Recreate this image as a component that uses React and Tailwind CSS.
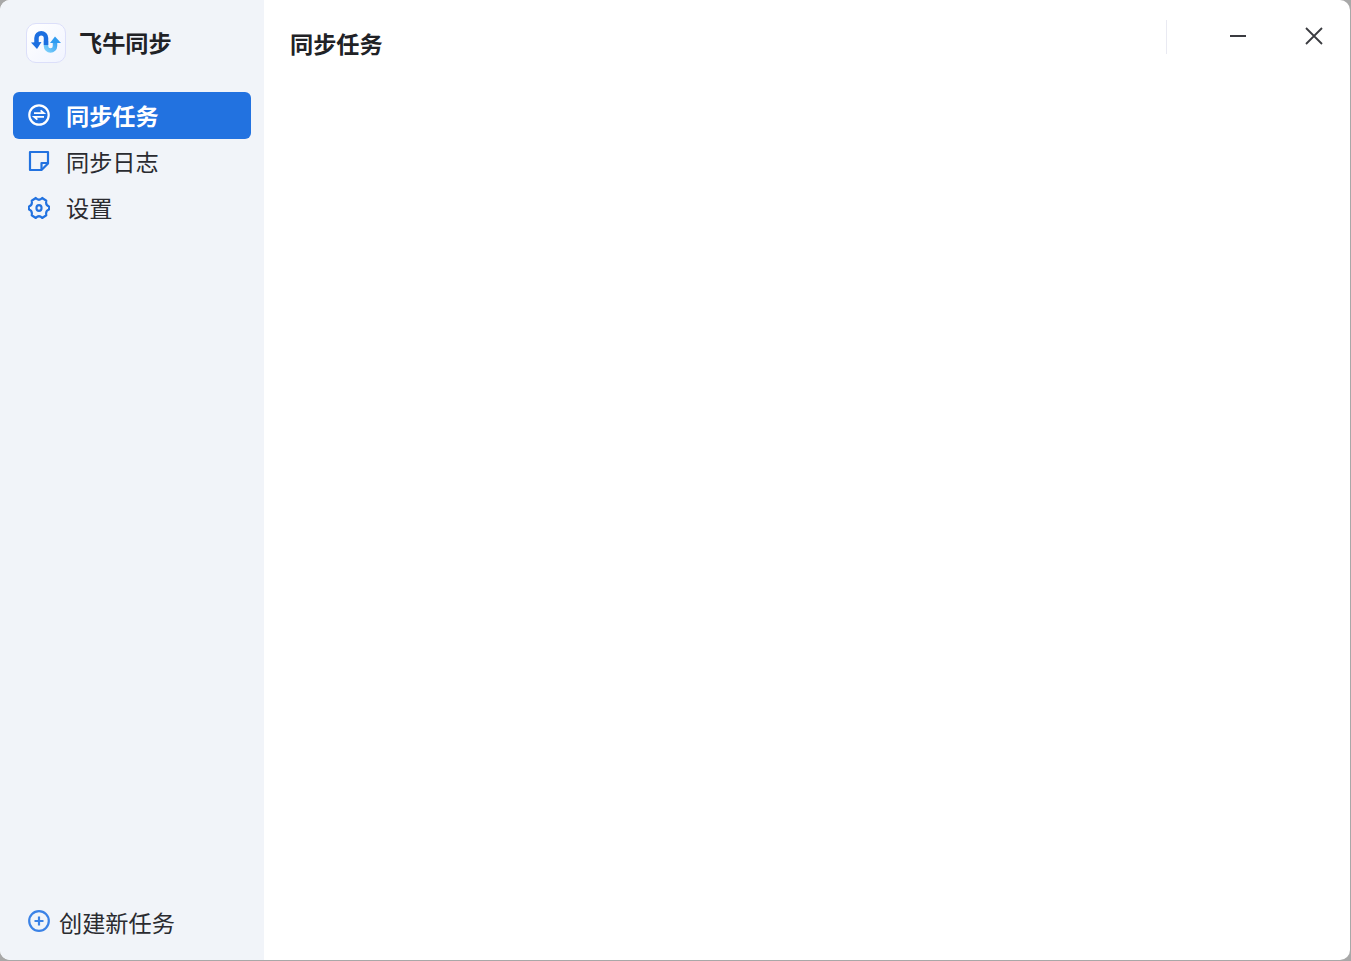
import { useState } from 'react';

const FONT = "font-['Noto_Sans_CJK_SC','Noto_Sans',sans-serif]";

function Logo() {
  return (
    <div className="flex h-10 w-10 items-center justify-center rounded-[10px] border border-[#dcdffa] bg-gradient-to-br from-white to-[#f1f4ff]">
      <svg width="32" height="26" viewBox="0 0 32 26" fill="none">
        <defs>
          <linearGradient id="logoLight" x1="14" y1="22" x2="26" y2="10" gradientUnits="userSpaceOnUse">
            <stop stopColor="#86d6fc" />
            <stop offset="1" stopColor="#2f9bf0" />
          </linearGradient>
        </defs>
        <path d="M16 11v5a4.500 4.500 0 0 0 9 0V13" stroke="url(#logoLight)" strokeWidth="4.500" />
        <path d="M6.500 13V8a4.750 4.750 0 0 1 9.500 0V15" stroke="#1c6fe0" strokeWidth="4.500" />
        <path d="M1 12.500l10.500-.5-4.500 7z" fill="#1c6fe0" />
        <path d="M20 13l5-6.500 6 6.500z" fill="#2f9bf0" />
      </svg>
    </div>
  );
}

function SyncIcon() {
  return (
    <svg width="22" height="22" viewBox="0 0 22 22" fill="none" stroke="currentColor" strokeWidth="2.200">
      <circle cx="11" cy="11" r="9.700" />
      <path d="M6 9.200h9.800l-3.200-2.800M16 12.800H6.200l3.200 2.800" strokeWidth="1.800" />
    </svg>
  );
}

function LogIcon() {
  return (
    <svg width="22" height="22" viewBox="0 0 22 22" fill="none" stroke="currentColor" strokeWidth="2.200" strokeLinejoin="round">
      <path d="M2 2h18v11.500L13.500 20H2z" />
      <path d="M20 13h-6.500v7" />
    </svg>
  );
}

function GearIcon() {
  return (
    <svg width="22" height="24" viewBox="0 -1 24 24" fill="none" stroke="currentColor" strokeWidth="2.300" strokeLinejoin="round" preserveAspectRatio="none">
      <path d="M8.500 2Q12 5.500 15.500 2L20 4.800Q18.800 9.200 23 10.500V13.500Q18.800 14.800 20 19.200L15.500 22Q12 18.500 8.500 22L4 19.200Q5.200 14.800 1 13.500V10.500Q5.200 9.200 4 4.800Z" />
      <circle cx="12" cy="12" r="2.800" />
    </svg>
  );
}

function PlusIcon() {
  return (
    <svg width="22" height="22" viewBox="0 0 22 22" fill="none" stroke="currentColor" strokeWidth="2.200">
      <circle cx="11" cy="11" r="9.800" />
      <path d="M6.500 11h9M11 6.500v9" />
    </svg>
  );
}

const navItems = [
  { key: 'tasks', label: '同步任务', icon: SyncIcon },
  { key: 'logs', label: '同步日志', icon: LogIcon },
  { key: 'settings', label: '设置', icon: GearIcon },
];

export default function App() {
  const [active, setActive] = useState('tasks');

  return (
    <div className={`h-[961px] w-[1351px] overflow-hidden bg-[#a8a8a8] ${FONT}`}>
      <div className="flex h-[960px] w-[1350px] overflow-hidden rounded-[10px] bg-white">
        {/* Sidebar */}
        <aside className="flex w-[264px] shrink-0 flex-col bg-[#f1f4f9] pb-[20px]">
          <div className="flex h-[92px] items-center gap-[13px] pb-[7px] pl-[26px]">
            <Logo />
            <span className="text-[23.200px] font-bold text-[#212226]">飞牛同步</span>
          </div>

          <nav className="flex flex-col px-[13px]">
            {navItems.map(({ key, label, icon: Icon }) => (
              <button
                key={key}
                onClick={() => setActive(key)}
                className={`flex h-[46px] items-center gap-[16px] rounded-md pl-[15px] text-[23.200px] first:h-[47px] ${
                  active === key
                    ? 'bg-[#2272e0] font-bold text-white'
                    : 'text-[#2a2b30]'
                }`}
              >
                <span className={`flex w-[22px] justify-center pb-[2px] ${active === key ? 'text-white' : 'text-[#2272e0]'}`}>
                  <Icon />
                </span>
                <span className={active === key ? '' : 'pb-[2px]'}>{label}</span>
              </button>
            ))}
          </nav>

          <button className="mt-auto flex items-center gap-[9px] pl-[28px] text-[23.200px] text-[#2a2b30]">
            <span className="pb-[4px] text-[#3b82e6]">
              <PlusIcon />
            </span>
            创建新任务
          </button>
        </aside>

        {/* Main */}
        <main className="flex-1">
          <div className="flex h-[92px] items-start justify-between">
            <h1 className="pl-[26px] pt-[26px] text-[23.200px] leading-[34px] font-bold text-[#212226]">同步任务</h1>
            <div className="flex items-start pt-[20px]">
              <div className="h-[34px] w-px bg-[#e9eaf2]" />
              <button className="ml-[63px] flex h-8 w-4 items-center justify-center text-[#3a3b40]">
                <span className="block h-[2px] w-4 bg-current" />
              </button>
              <button className="ml-[59px] mr-[27px] flex h-8 w-[18px] items-center justify-center text-[#3a3b40]">
                <svg width="18" height="18" viewBox="0 0 18 18" fill="none" stroke="currentColor" strokeWidth="1.800">
                  <path d="M1 1l16 16M17 1L1 17" />
                </svg>
              </button>
            </div>
          </div>
        </main>
      </div>
    </div>
  );
}
